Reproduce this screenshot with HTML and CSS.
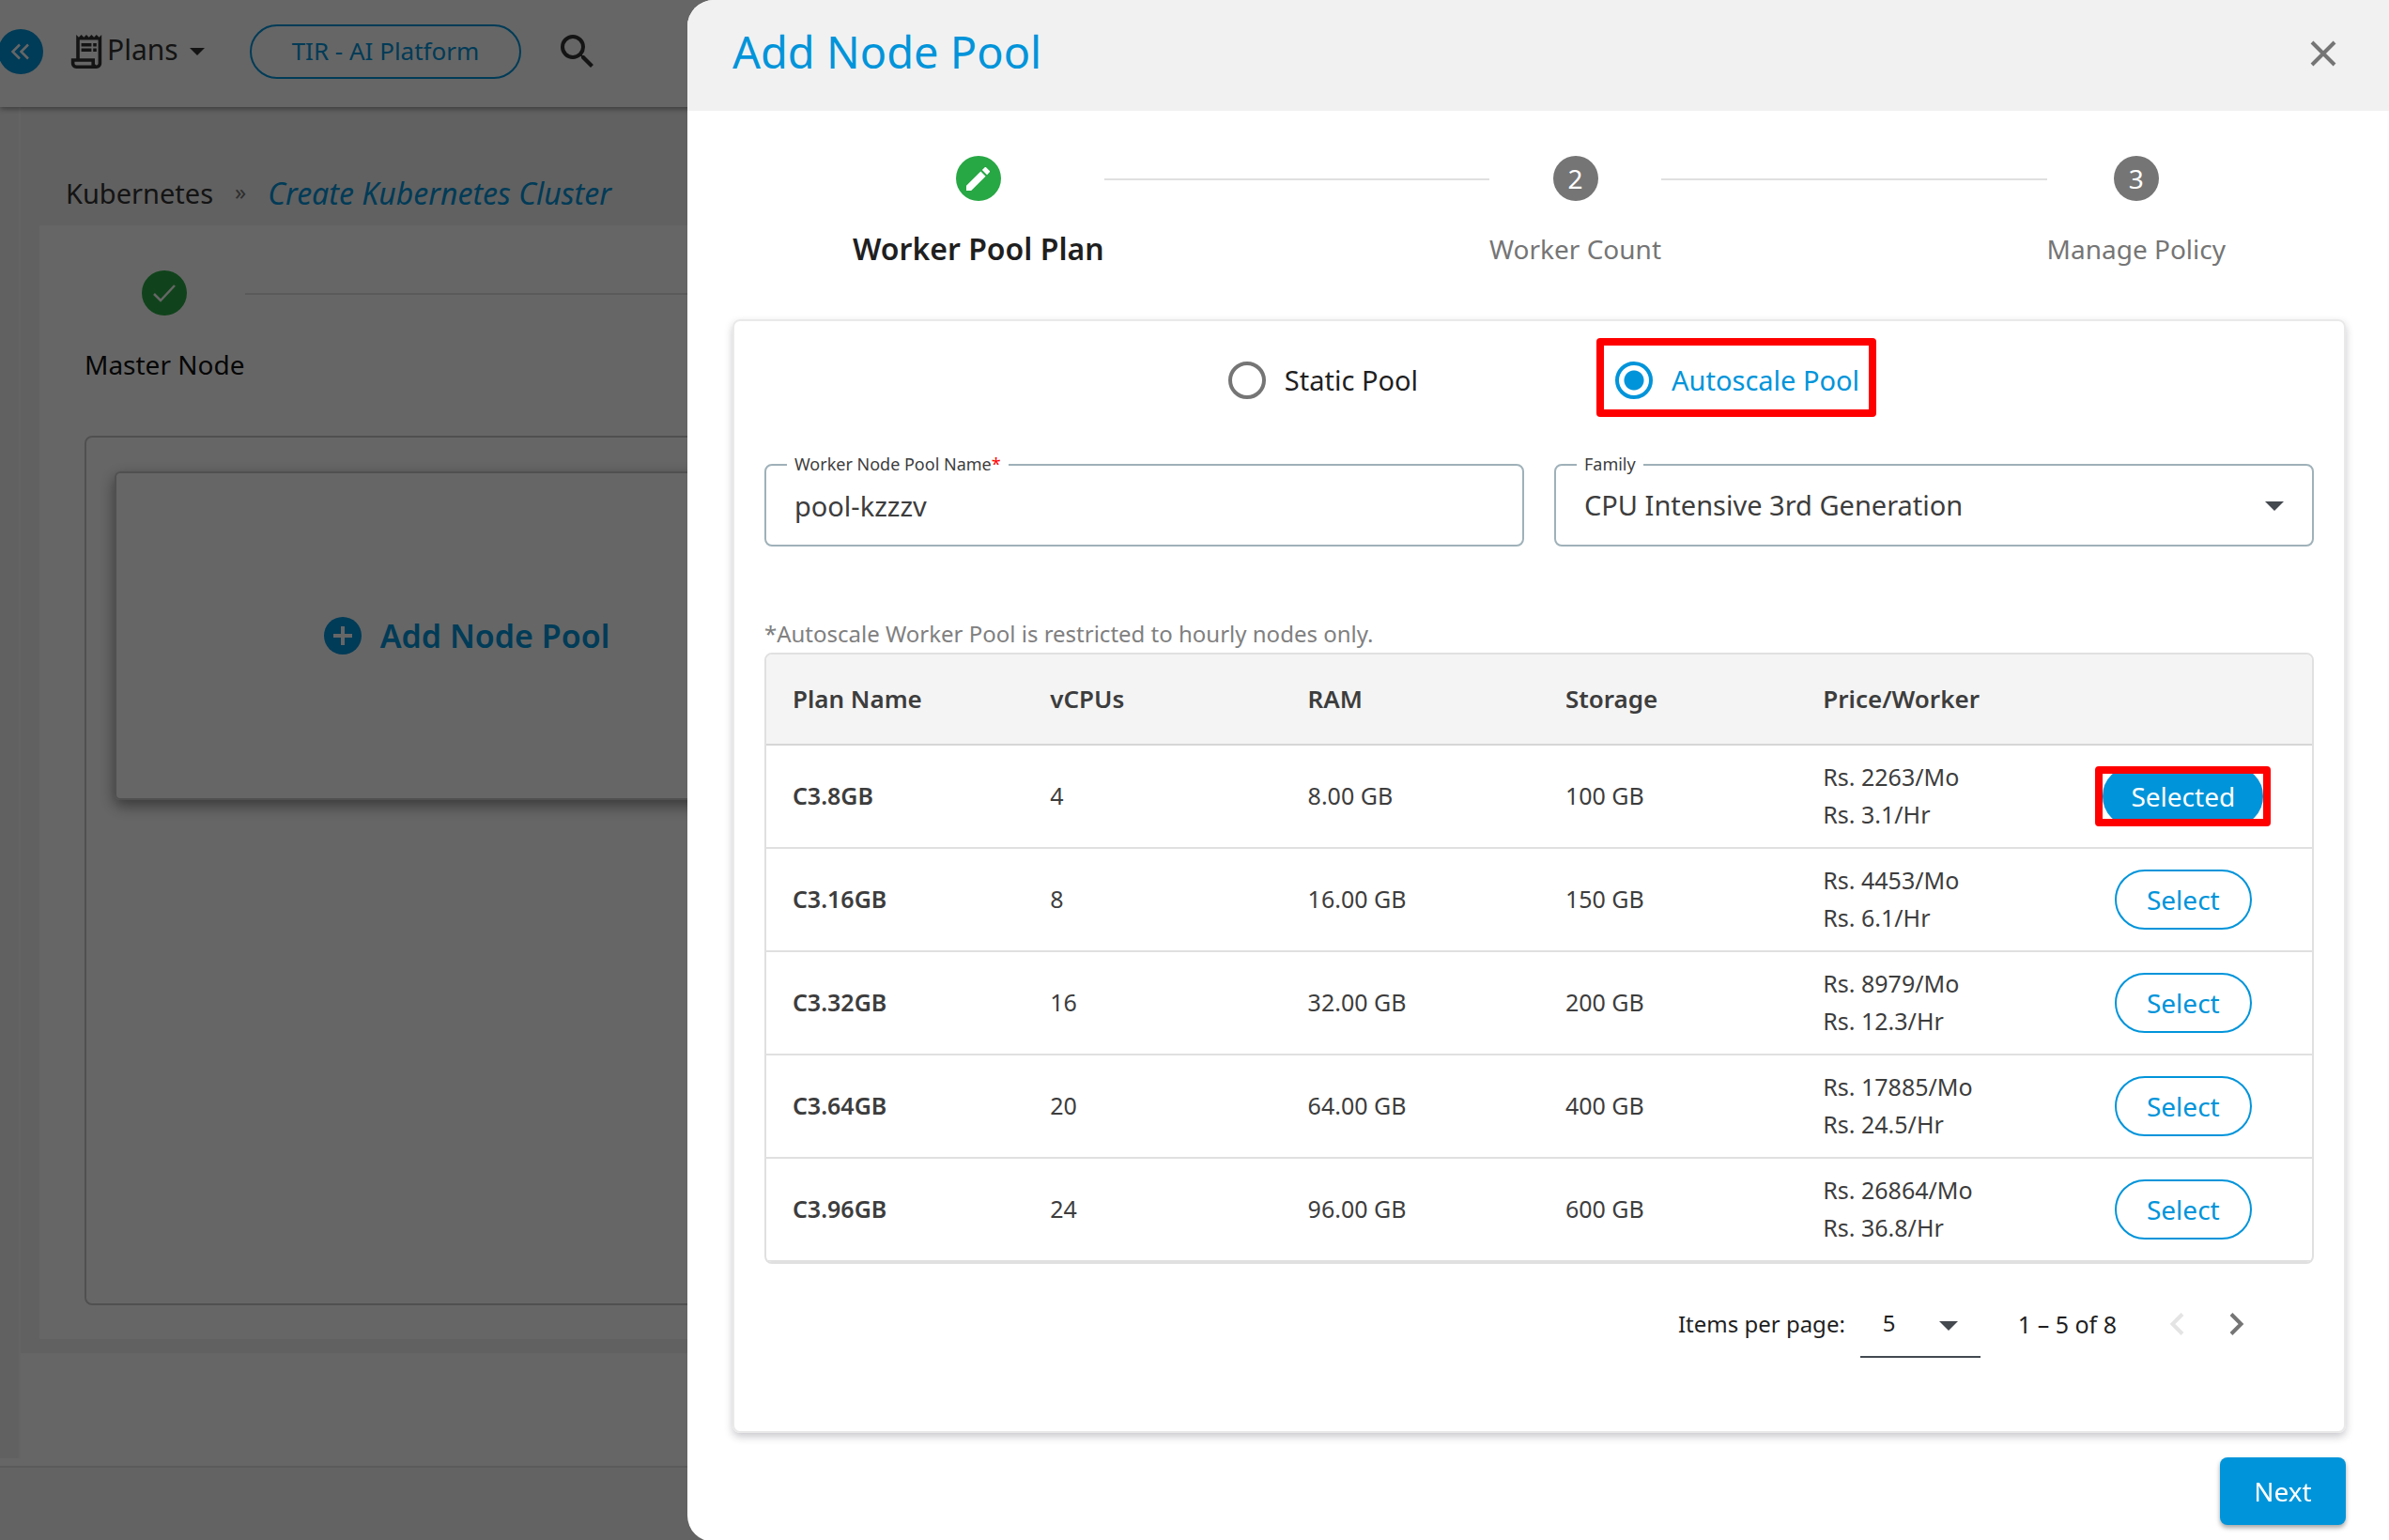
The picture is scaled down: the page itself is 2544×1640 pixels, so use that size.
FILE: index.html
```html
<!DOCTYPE html>
<html lang="en">
<head>
<meta charset="utf-8">
<meta name="viewport" content="width=device-width, initial-scale=1">
<title>Add Node Pool</title>
<link rel="stylesheet" href="styles.css">
</head>
<body>
<div class="app">
  <header class="topbar">
    <button class="collapse" type="button" aria-label="Collapse menu">
      <svg viewBox="0 0 24 24" width="24" height="24"><path d="M11 4.500 3.500 12l7.500 7.500M20 4.500 12.500 12l7.500 7.500" fill="none" stroke="currentColor" stroke-width="2.500"/></svg>
    </button>
    <button class="plans" type="button">
      <svg class="receipt" viewBox="2 2 20 20" width="36" height="36"><path fill="currentColor" d="M19.500 3.500 18 2l-1.500 1.500L15 2l-1.500 1.500L12 2l-1.500 1.500L9 2 7.500 3.500 6 2v14H3v3c0 1.660 1.340 3 3 3h12c1.660 0 3-1.340 3-3V2l-1.500 1.500zM15 20H6c-.550 0-1-.450-1-1v-1h10v2zm4-1c0 .550-.450 1-1 1s-1-.450-1-1v-3H8V5h11v14zM9 7h6v2H9zm7 0h2v2h-2zM9 10h6v2H9zm7 0h2v2h-2z"/></svg>
      <span>Plans</span>
      <svg class="plans-caret" viewBox="0 0 16 8" width="16" height="8"><path fill="currentColor" d="M0 0h16L8 8z"/></svg>
    </button>
    <a class="platform" href="#">TIR - AI Platform</a>
    <button class="search" type="button" aria-label="Search">
      <svg viewBox="3 3 18 18" width="36" height="36"><path fill="currentColor" d="M15.500 14h-.790l-.280-.270A6.470 6.470 0 0 0 16 9.500 6.500 6.500 0 1 0 9.500 16c1.610 0 3.090-.590 4.230-1.570l.270.280v.790l5 4.990L20.490 19l-4.990-5zm-6 0a4.500 4.500 0 1 1 0-9 4.500 4.500 0 0 1 0 9z"/></svg>
    </button>
  </header>
  <div class="body">
    <aside class="rail"></aside>
    <main class="main">
      <section class="page">
        <nav class="crumbs" aria-label="Breadcrumb">
          <a href="#">Kubernetes</a>
          <span class="sep">»</span>
          <a class="current" href="#">Create Kubernetes Cluster</a>
        </nav>
        <div class="sheet">
          <div class="sheet-steps">
            <div class="sheet-step">
              <span class="dot done"><svg viewBox="0 0 24 24" width="24" height="24"><path d="M1 13l7 7L23 4" fill="none" stroke="currentColor" stroke-width="2.500"/></svg></span>
              <span>Master Node</span>
            </div>
            <div class="rule"></div>
          </div>
          <div class="pools">
            <button class="pool-add" type="button">
              <svg viewBox="0 0 40 40" width="40" height="40"><circle cx="20" cy="20" r="20" fill="#0094da"/><path d="M20 10v20M10 20h20" stroke="#fff" stroke-width="4"/></svg>
              <span>Add Node Pool</span>
            </button>
          </div>
        </div>
      </section>
    </main>
  </div>
  <footer class="footer"></footer>
</div>
<div class="backdrop"></div>

<section class="drawer" role="dialog" aria-labelledby="drawer-title">
  <header class="drawer-head">
    <h1 id="drawer-title">Add Node Pool</h1>
    <button class="close" type="button" aria-label="Close">
      <svg viewBox="0 0 28 28" width="28" height="28"><path d="M2 2l24 24M26 2 2 26" stroke="currentColor" stroke-width="4"/></svg>
    </button>
  </header>
  <div class="drawer-body">
    <ol class="steps">
      <li class="step active">
        <span class="dot done"><svg viewBox="3 3 18 18" width="25" height="25"><path fill="currentColor" d="M3 17.250V21h3.750L17.810 9.940l-3.750-3.750L3 17.250zM20.710 7.040a1 1 0 0 0 0-1.410l-2.340-2.340a1 1 0 0 0-1.410 0l-1.830 1.830 3.750 3.750 1.830-1.830z"/></svg></span>
        <span class="step-label">Worker Pool Plan</span>
      </li>
      <li class="rule" role="presentation"></li>
      <li class="step"><span class="dot">2</span><span class="step-label">Worker Count</span></li>
      <li class="rule" role="presentation"></li>
      <li class="step"><span class="dot">3</span><span class="step-label">Manage Policy</span></li>
    </ol>

    <form class="card">
      <div class="modes">
        <label class="mode"><input type="radio" name="mode"><span>Static Pool</span></label>
        <label class="mode on"><input type="radio" name="mode" checked><span>Autoscale Pool</span></label>
      </div>

      <div class="fields">
        <div class="field">
          <label for="pool-name">Worker Node Pool Name<span class="req">*</span></label>
          <input id="pool-name" type="text" value="pool-kzzzv">
        </div>
        <div class="field">
          <label for="family">Family</label>
          <select id="family"><option>CPU Intensive 3rd Generation</option></select>
          <svg class="caret" viewBox="0 0 20 10" width="20" height="10"><path fill="currentColor" d="M0 0h20L10 10z"/></svg>
        </div>
      </div>

      <p class="note">*Autoscale Worker Pool is restricted to hourly nodes only.</p>

      <div class="plan-wrap">
        <table class="plan-table">
          <thead>
            <tr><th>Plan Name</th><th>vCPUs</th><th>RAM</th><th>Storage</th><th>Price/Worker</th><th></th></tr>
          </thead>
          <tbody>
            <tr><th scope="row">C3.8GB</th><td>4</td><td>8.00 GB</td><td>100 GB</td><td>Rs. 2263/Mo<br>Rs. 3.1/Hr</td><td class="pick"><span class="marked"><button class="pill chosen" type="button">Selected</button></span></td></tr>
            <tr><th scope="row">C3.16GB</th><td>8</td><td>16.00 GB</td><td>150 GB</td><td>Rs. 4453/Mo<br>Rs. 6.1/Hr</td><td class="pick"><button class="pill" type="button">Select</button></td></tr>
            <tr><th scope="row">C3.32GB</th><td>16</td><td>32.00 GB</td><td>200 GB</td><td>Rs. 8979/Mo<br>Rs. 12.3/Hr</td><td class="pick"><button class="pill" type="button">Select</button></td></tr>
            <tr><th scope="row">C3.64GB</th><td>20</td><td>64.00 GB</td><td>400 GB</td><td>Rs. 17885/Mo<br>Rs. 24.5/Hr</td><td class="pick"><button class="pill" type="button">Select</button></td></tr>
            <tr><th scope="row">C3.96GB</th><td>24</td><td>96.00 GB</td><td>600 GB</td><td>Rs. 26864/Mo<br>Rs. 36.8/Hr</td><td class="pick"><button class="pill" type="button">Select</button></td></tr>
          </tbody>
        </table>
      </div>

      <div class="pager">
        <label for="page-size">Items per page:</label>
        <div class="size">
          <select id="page-size"><option>5</option></select>
          <svg class="caret" viewBox="0 0 20 10" width="20" height="10"><path fill="currentColor" d="M0 0h20L10 10z"/></svg>
        </div>
        <span class="range">1 – 5 of 8</span>
        <button class="turn" type="button" aria-label="Previous page" disabled><svg viewBox="0 0 16 24" width="16" height="24"><path d="M14 1.500 3.500 12 14 22.500" fill="none" stroke="currentColor" stroke-width="4"/></svg></button>
        <button class="turn" type="button" aria-label="Next page"><svg viewBox="0 0 16 24" width="16" height="24"><path d="M2 1.500 12.500 12 2 22.500" fill="none" stroke="currentColor" stroke-width="4"/></svg></button>
      </div>
    </form>

    <div class="actions"><button class="next" type="button">Next</button></div>
  </div>
</section>
</body>
</html>
```
FILE: styles.css
```css
* { box-sizing: border-box; }

body {
  margin: 0;
  font-family: "Noto Sans", "Open Sans", sans-serif;
  font-size: 24px;
  line-height: 40px;
  color: #3d3d3d;
}

button, input, select { font: inherit; color: inherit; }
button { border: 0; padding: 0; background: none; cursor: pointer; }
a { color: inherit; text-decoration: none; }
svg { display: block; flex: none; }

/* Page behind the drawer */
.app {
  display: flex;
  flex-direction: column;
  min-height: 100vh;
  background: #fff;
}

.topbar {
  position: relative;
  display: flex;
  align-items: center;
  height: 114px;
  padding-bottom: 4px;
  background: #fff;
  box-shadow: 0 2px 6px rgba(0, 0, 0, .4);
}

.collapse {
  display: grid;
  place-items: center;
  width: 48px;
  height: 48px;
  margin-left: -2px;
  border-radius: 50%;
  background: #0094da;
  color: #fff;
}

.plans {
  display: flex;
  align-items: center;
  gap: 4px;
  margin-left: 28px;
  color: #333;
  font-size: 30px;
  line-height: 36px;
}
.plans span { padding-bottom: 4px; }
.plans-caret { margin-left: 8px; }

.platform {
  height: 58px;
  margin-left: 48px;
  padding: 0 43px;
  border: 2px solid #0094da;
  border-radius: 29px;
  color: #0094da;
  font-size: 26px;
  line-height: 52px;
}

.search { margin-left: 42px; color: #333; }

.body { display: flex; flex: 1; }
.rail {
  width: 22px;
  margin-bottom: 8px;
  border-right: 2px solid #fafafa;
  background: #f3f3f3;
}
.main { display: flex; flex: 1; padding-bottom: 120px; }
.page {
  display: flex;
  flex: 1;
  flex-direction: column;
  padding: 72px 20px 15px;
  background: #f2f2f2;
}

.crumbs {
  display: flex;
  gap: 23px;
  padding: 0 0 14px 28px;
  color: #333;
  font-size: 29px;
}
.crumbs .sep { color: #777; font-size: 24px; line-height: 36px; }
.crumbs .current { color: #0094da; font-size: 32px; font-style: italic; }

.sheet {
  display: flex;
  flex: 1;
  flex-direction: column;
  gap: 56px;
  padding: 48px 48px 36px;
  background: #fff;
}
.sheet-steps { display: flex; color: #111; font-size: 28px; }
.sheet-step {
  display: flex;
  flex-direction: column;
  align-items: center;
  gap: 32px;
}

.dot {
  display: grid;
  place-items: center;
  width: 48px;
  height: 48px;
  border-radius: 50%;
  background: #757575;
  color: #fff;
  font-size: 28px;
}
.dot.done { background: #28a745; }

.rule {
  flex: 1;
  height: 2px;
  margin-top: 24px;
  background: #e0e0e0;
}

.pools {
  flex: 1;
  padding: 36px 30px;
  border: 2px solid #c8c8c8;
  border-radius: 8px;
}
.pool-add {
  display: flex;
  align-items: center;
  justify-content: center;
  gap: 20px;
  width: 750px;
  max-width: 100%;
  height: 350px;
  border: 2px solid #c8c8c8;
  border-radius: 6px;
  box-shadow: 0 6px 16px rgba(0, 0, 0, .45);
  color: #0094da;
  font-size: 34px;
  font-weight: 600;
}

.footer {
  height: 79px;
  border-top: 2px solid #e4e4e4;
  background: #f7f7f7;
}

.backdrop {
  position: fixed;
  inset: 0;
  background: rgba(0, 0, 0, .6);
}

/* Drawer */
.drawer {
  position: absolute;
  top: 0;
  right: 0;
  width: 71.23%;
  min-height: 100%;
  overflow: hidden;
  border-radius: 28px 0 0 28px;
  background: #fff;
}

.drawer-head {
  display: flex;
  align-items: center;
  justify-content: space-between;
  height: 118px;
  padding: 0 56px 4px 48px;
  background: #f1f1f1;
}
.drawer-head h1 {
  margin: 0;
  padding-bottom: 4px;
  color: #0094da;
  font-size: 47px;
  font-weight: 400;
  line-height: 64px;
}
.close { color: #757575; }

.drawer-body { padding: 48px 46px 18px 48px; }

.steps {
  display: flex;
  margin: 0;
  padding: 0 128px;
  list-style: none;
}
.step {
  display: flex;
  flex-direction: column;
  align-items: center;
  gap: 31px;
  color: #757575;
  font-size: 28px;
}
.step.active { color: #1f1f1f; font-weight: 600; font-size: 32px; }

.card {
  margin-top: 55px;
  padding: 0 32px 78px;
  border: 2px solid #e9e9e9;
  border-radius: 8px;
  box-shadow: 0 4px 8px rgba(40, 40, 60, .25);
}

.modes {
  display: flex;
  justify-content: center;
  gap: 190px;
  padding: 18px 0 50px 28px;
  color: #1f1f1f;
  font-size: 29px;
}
.mode {
  display: flex;
  align-items: center;
  gap: 20px;
  height: 84px;
  padding-top: 6px;
}
.mode input {
  appearance: none;
  width: 40px;
  height: 40px;
  margin: 0;
  border: 4px solid #757575;
  border-radius: 50%;
}
.mode.on {
  padding: 6px 10px 0 12px;
  border: 8px solid #f00;
  border-radius: 4px;
  color: #0094da;
}
.mode.on input {
  border-color: #0094da;
  background: radial-gradient(circle, #0094da 10px, #fff 11px);
}

.fields { display: grid; grid-template-columns: 1fr 1fr; gap: 32px; }
.field { position: relative; color: #3d3d3d; }
.field label {
  position: absolute;
  top: -12px;
  left: 24px;
  padding: 0 8px;
  background: #fff;
  font-size: 18px;
  line-height: 24px;
}
.req { color: #f00; }
.field input, .field select {
  display: block;
  appearance: none;
  width: 100%;
  height: 88px;
  padding: 0 30px;
  border: 2px solid #9fb1b9;
  border-radius: 8px;
  background: #fff;
  font-size: 29px;
}
.caret { position: absolute; color: #444950; pointer-events: none; }
.field .caret { top: 40px; right: 32px; }

.note { margin: 73px 0 0; color: #808080; }

.plan-wrap {
  overflow: hidden;
  border: 2px solid #e0e0e0;
  border-radius: 8px;
}
.plan-table {
  width: 100%;
  border-collapse: collapse;
  table-layout: fixed;
  font-size: 25px;
}
.plan-table th, .plan-table td {
  height: 110px;
  padding: 0 0 2px 28px;
  border-bottom: 2px solid #e0e0e0;
  text-align: left;
}
.plan-table th { font-weight: 600; }
.plan-table thead th {
  height: 96px;
  border-color: #d6d6d6;
  background: #f4f4f4;
  font-size: 26px;
}
.plan-table .pick { padding: 0; text-align: center; }

.pill {
  height: 64px;
  padding: 0 32px;
  border: 2px solid #0094da;
  border-radius: 32px;
  color: #0094da;
  font-size: 28px;
}
.pill.chosen { background: #0094da; color: #fff; padding: 0 28px; }
.marked { position: relative; display: inline-block; }
.marked::after {
  content: "";
  position: absolute;
  inset: 0 -8px;
  border: 8px solid #f00;
  border-radius: 4px;
}

.pager {
  display: flex;
  align-items: center;
  justify-content: flex-end;
  padding: 28px 74px 0 0;
  color: #1f1f1f;
}
.size { position: relative; margin: 0 40px 0 16px; }
.size select {
  display: block;
  appearance: none;
  width: 128px;
  height: 72px;
  padding: 0 24px;
  border: 0;
  border-bottom: 2px solid #444950;
  background: none;
}
.size .caret { top: 33px; right: 24px; }
.turn { color: #757575; }
.turn:disabled { color: #e4e4e4; }
.range { margin-right: 56px; font-size: 25px; }
.turn + .turn { margin-left: 48px; }

.actions { display: flex; justify-content: flex-end; margin-top: 26px; }
.next {
  width: 134px;
  height: 72px;
  border-radius: 8px;
  background: #0094da;
  box-shadow: 0 3px 5px rgba(0, 0, 0, .35);
  color: #fff;
  font-size: 28px;
}
```
